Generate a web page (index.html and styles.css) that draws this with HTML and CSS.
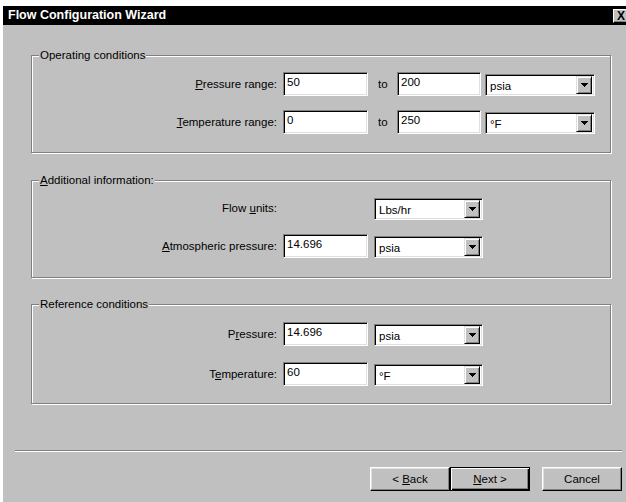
FILE: index.html
```html
<!DOCTYPE html>
<html lang="en">
<head>
<meta charset="utf-8">
<title>Flow Configuration Wizard</title>
<link rel="stylesheet" href="styles.css">
</head>
<body>
<div class="window">
  <div class="titlebar">
    <span class="title">Flow Configuration Wizard</span>
    <span class="close">X</span>
  </div>

  <div class="client">
    <fieldset class="group g1">
      <legend>Operating conditions</legend>
      <div class="row">
        <label class="lbl"><u>P</u>ressure range:</label>
        <div class="edit">50</div>
        <span class="to">to</span>
        <div class="edit edit-hi">200</div>
        <div class="combo combo-wide"><span class="val">psia</span><span class="drop"><svg width="7" height="4" viewBox="0 0 7 4"><rect x="0" y="0" width="7" height="1"/><rect x="1" y="1" width="5" height="1"/><rect x="2" y="2" width="3" height="1"/><rect x="3" y="3" width="1" height="1"/></svg></span></div>
      </div>
      <div class="row">
        <label class="lbl"><u>T</u>emperature range:</label>
        <div class="edit">0</div>
        <span class="to">to</span>
        <div class="edit edit-hi">250</div>
        <div class="combo combo-wide"><span class="val">°F</span><span class="drop"><svg width="7" height="4" viewBox="0 0 7 4"><rect x="0" y="0" width="7" height="1"/><rect x="1" y="1" width="5" height="1"/><rect x="2" y="2" width="3" height="1"/><rect x="3" y="3" width="1" height="1"/></svg></span></div>
      </div>
    </fieldset>

    <fieldset class="group g2">
      <legend><u>A</u>dditional information:</legend>
      <div class="row">
        <label class="lbl">Flow <u>u</u>nits:</label>
        <div class="slot"></div>
        <div class="combo"><span class="val">Lbs/hr</span><span class="drop"><svg width="7" height="4" viewBox="0 0 7 4"><rect x="0" y="0" width="7" height="1"/><rect x="1" y="1" width="5" height="1"/><rect x="2" y="2" width="3" height="1"/><rect x="3" y="3" width="1" height="1"/></svg></span></div>
      </div>
      <div class="row">
        <label class="lbl"><u>A</u>tmospheric pressure:</label>
        <div class="edit">14.696</div>
        <div class="combo"><span class="val">psia</span><span class="drop"><svg width="7" height="4" viewBox="0 0 7 4"><rect x="0" y="0" width="7" height="1"/><rect x="1" y="1" width="5" height="1"/><rect x="2" y="2" width="3" height="1"/><rect x="3" y="3" width="1" height="1"/></svg></span></div>
      </div>
    </fieldset>

    <fieldset class="group g3">
      <legend>Reference conditions</legend>
      <div class="row">
        <label class="lbl">P<u>r</u>essure:</label>
        <div class="edit">14.696</div>
        <div class="combo"><span class="val">psia</span><span class="drop"><svg width="7" height="4" viewBox="0 0 7 4"><rect x="0" y="0" width="7" height="1"/><rect x="1" y="1" width="5" height="1"/><rect x="2" y="2" width="3" height="1"/><rect x="3" y="3" width="1" height="1"/></svg></span></div>
      </div>
      <div class="row">
        <label class="lbl">T<u>e</u>mperature:</label>
        <div class="edit">60</div>
        <div class="combo"><span class="val">°F</span><span class="drop"><svg width="7" height="4" viewBox="0 0 7 4"><rect x="0" y="0" width="7" height="1"/><rect x="1" y="1" width="5" height="1"/><rect x="2" y="2" width="3" height="1"/><rect x="3" y="3" width="1" height="1"/></svg></span></div>
      </div>
    </fieldset>
  </div>

  <div class="sep"></div>

  <div class="buttons">
    <button class="btn">&lt; <u>B</u>ack</button>
    <button class="btn btn-default"><u>N</u>ext &gt;</button>
    <button class="btn btn-cancel">Cancel</button>
  </div>
</div>
</body>
</html>
```

FILE: styles.css
```css
html, body {
  margin: 0;
  padding: 0;
  background: #ffffff;
}

body {
  font-family: "Liberation Sans", Arial, sans-serif;
  font-size: 11.5px;
  color: #000;
}

.window {
  margin: 6px 0 0 3px;
  height: 496px;
  background: #c0c0c0;
  display: flex;
  flex-direction: column;
  overflow: hidden;
}

/* caption bar */
.titlebar {
  flex: none;
  height: 19px;
  background: #000;
  color: #fff;
  display: flex;
  align-items: center;
  padding-left: 5px;
}

.title {
  font-weight: bold;
  font-size: 12.5px;
  line-height: 19px;
}

.close {
  margin-left: auto;
  margin-right: -3px;
  width: 16px;
  height: 14px;
  box-sizing: border-box;
  background: #c0c0c0;
  color: #000;
  font-weight: bold;
  font-size: 12px;
  line-height: 12px;
  text-align: center;
  border: 1px solid;
  border-color: #fff #000 #000 #fff;
  box-shadow: inset -1px -1px #808080;
}

/* dialog body */
.client {
  padding: 23px 15px 0 28px;
}

.group {
  margin: 0;
  padding: 0;
  border: 1px solid #808080;
  box-shadow: 1px 1px 0 #fff, inset 1px 1px 0 #fff;
  min-width: 0;
}

.group legend {
  margin-left: 7px;
  padding: 0 1px;
  line-height: 14px;
  background: #c0c0c0;
}

.g1 { padding: 10px 0 18px; }
.g2 { margin-top: 20px; padding: 9px 0 19px; }
.g3 { margin-top: 19px; padding: 11px 0 17px; }

.g1 .row + .row { margin-top: 14px; }
.g2 .row + .row { margin-top: 14px; }
.g3 .row + .row { margin-top: 16px; }

.row {
  display: flex;
  align-items: flex-end;
}

.lbl {
  width: 245px;
  margin-right: 6px;
  text-align: right;
  align-self: center;
  line-height: 14px;
}

/* sunken edit field */
.edit, .slot {
  width: 85px;
  height: 24px;
  box-sizing: border-box;
  flex: none;
}

.edit {
  background: #fff;
  border: 1px solid;
  border-color: #808080 #fff #fff #808080;
  box-shadow: inset 1px 1px #000, inset -1px -1px #dfdfdf;
  padding: 2px 3px;
  line-height: 14px;
}

.edit-hi { width: 84px; }

.to {
  width: 29px;
  padding-left: 10px;
  box-sizing: border-box;
  align-self: center;
}

/* drop-down list */
.combo {
  width: 109px;
  height: 22px;
  margin-left: 6px;
  box-sizing: border-box;
  flex: none;
  display: flex;
  align-items: center;
  background: #fff;
  border: 1px solid;
  border-color: #808080 #fff #fff #808080;
  box-shadow: inset 1px 1px #000, inset -1px -1px #dfdfdf;
  padding: 1px;
}

.combo-wide {
  width: 110px;
  margin-left: 4px;
}

.val {
  flex: 1;
  padding-left: 3px;
  padding-top: 2px;
  line-height: 14px;
}

.drop {
  width: 16px;
  height: 18px;
  box-sizing: border-box;
  margin-right: 1px;
  background: #c0c0c0;
  border: 1px solid;
  border-color: #dfdfdf #000 #000 #dfdfdf;
  box-shadow: inset 1px 1px #fff, inset -1px -1px #808080;
  display: flex;
  align-items: center;
  justify-content: center;
}

.drop svg {
  display: block;
  fill: #000;
}

/* etched divider above the buttons */
.sep {
  margin: 46px 4px 0 12px;
  height: 0;
  border-top: 1px solid #808080;
  border-bottom: 1px solid #fff;
}

.buttons {
  display: flex;
  justify-content: flex-end;
  padding: 15px 4px 0 0;
}

.btn {
  width: 80px;
  height: 24px;
  margin: 0;
  padding: 0;
  box-sizing: border-box;
  font-family: inherit;
  font-size: 11.5px;
  color: #000;
  background: #c0c0c0;
  border: 1px solid;
  border-color: #fff #000 #000 #fff;
  box-shadow: inset -1px -1px #808080, inset 1px 1px #dfdfdf;
  border-radius: 0;
}

.btn-default {
  border-color: #000;
  box-shadow: inset 1px 1px #fff, inset -1px -1px #000, inset -2px -2px #808080;
}

.btn-cancel {
  margin-left: 12px;
}
```
